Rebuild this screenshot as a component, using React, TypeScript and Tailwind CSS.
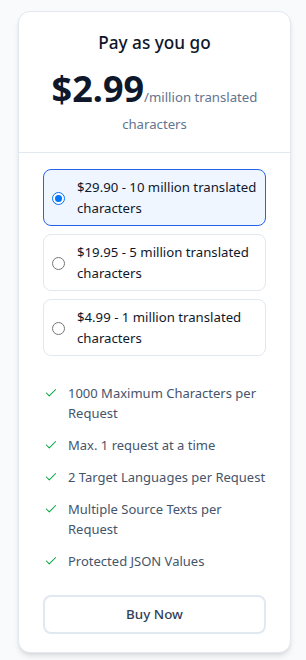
import React from 'react';

const options = [
  ['$29.90 - 10 million translated', 'characters'],
  ['$19.95 - 5 million translated', 'characters'],
  ['$4.99 - 1 million translated', 'characters'],
];

const features = [
  ['1000 Maximum Characters per', 'Request'],
  ['Max. 1 request at a time'],
  ['2 Target Languages per Request'],
  ['Multiple Source Texts per', 'Request'],
  ['Protected JSON Values'],
];

const Check = () => (
  <svg className="mt-[3px] h-[14px] w-[14px] shrink-0 text-green-600" viewBox="0 0 24 24" fill="none" stroke="currentColor" strokeWidth="1.8" strokeLinecap="round" strokeLinejoin="round">
    <path d="M20 6 9 17l-5-5" />
  </svg>
);

const App: React.FC = () => {
  const [selected, setSelected] = React.useState(0);
  return (
    <div className="min-h-screen bg-slate-50 pt-[11px] pr-[15px] pb-2 pl-[18px]" style={{ fontFamily: '"Noto Sans", sans-serif' }}>
      <div className="rounded-xl border border-slate-200 bg-white shadow-md">
        <div className="px-6 pt-[20px] pb-[16px] text-center">
          <h2 className="text-[17.2px] font-medium leading-[22px] text-slate-900">Pay as you go</h2>
          <p className="mt-[12px] text-[13.2px] leading-[24px] text-slate-500">
            <span className="text-[36px] font-bold leading-[46px] text-slate-900">$2.99</span>
            /million translated characters
          </p>
        </div>
        <div className="border-t border-slate-200 px-6 pt-4 pb-[18px]">
          <div className="flex flex-col gap-2">
            {options.map((o, i) => (
              <label
                key={o[0]}
                onClick={() => setSelected(i)}
                className={
                  i === selected
                    ? 'flex cursor-pointer items-center gap-[12px] rounded-lg border border-[#2563eb] bg-blue-50 pt-[7px] pb-[6px] pr-1 pl-[8px]'
                    : 'flex cursor-pointer items-center gap-[12px] rounded-lg border border-slate-200 bg-white pt-[7px] pb-[6px] pr-1 pl-[8px]'
                }
              >
                <span
                  className={
                    i === selected
                      ? 'flex h-[13px] w-[13px] shrink-0 items-center justify-center rounded-full border-[1.5px] border-[#0075ff] bg-white'
                      : 'flex h-[13px] w-[13px] shrink-0 items-center justify-center rounded-full border border-[#767676] bg-white'
                  }
                >
                  {i === selected && <span className="h-[7px] w-[7px] rounded-full bg-[#0075ff]" />}
                </span>
                <span className="flex flex-col text-[13.2px] leading-[21px] whitespace-nowrap text-slate-900">
                  {o.map((l) => (
                    <span key={l}>{l}</span>
                  ))}
                </span>
              </label>
            ))}
          </div>
          <ul className="mt-[27px] flex flex-col gap-3">
            {features.map((f) => (
              <li key={f[0]} className="flex items-start gap-[10px] pl-[1px] text-[13px] leading-[20px] text-slate-600">
                <Check />
                <span className="flex flex-col whitespace-nowrap">
                  {f.map((l) => (
                    <span key={l}>{l}</span>
                  ))}
                </span>
              </li>
            ))}
          </ul>
          <button className="mt-[24px] h-[39px] w-full rounded-lg border-2 border-slate-200 bg-white text-[13.4px] font-medium text-slate-700">
            Buy Now
          </button>
        </div>
      </div>
    </div>
  );
};

export default App;
